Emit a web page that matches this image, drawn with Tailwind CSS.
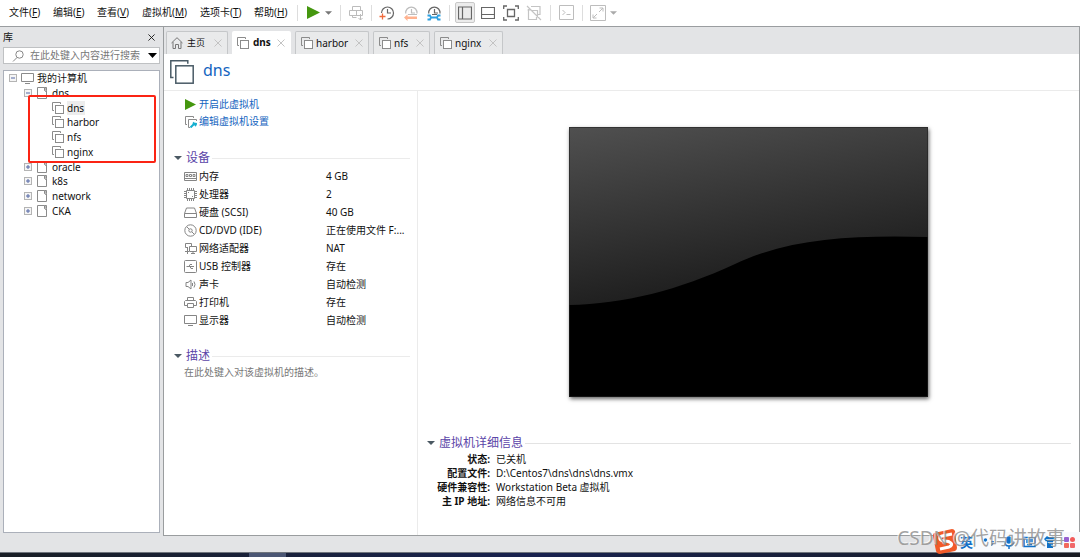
<!DOCTYPE html>
<html lang="zh-CN">
<head>
<meta charset="utf-8">
<title>dns - VMware Workstation</title>
<script src="https://cdn.jsdelivr.net/npm/@tailwindcss/browser@4"></script>
</head>
<body class="relative flex h-screen flex-col overflow-hidden bg-[#e3e4e6] font-['Noto_Sans','Noto_Sans_CJK_SC',sans-serif] text-[10px] text-[#111]">
<svg class="hidden">
  <symbol id="vm" viewBox="0 0 12 12"><path d="M2 8.500H.5v-8h8V2" fill="none" stroke="#8b8b8b"/><rect x="3.500" y="3.500" width="8" height="8" fill="#fff" stroke="#8b8b8b"/></symbol>
  <symbol id="folder" viewBox="0 0 12 12"><path d="M8.500.500H1.500v11h9V4" fill="none" stroke="#8b8b8b"/><path d="M8.500.500h2v3l-1 1-1-1z" fill="#bbb" stroke="#8b8b8b"/></symbol>
  <symbol id="minus" viewBox="0 0 8 8"><rect x=".5" y=".5" width="7" height="7" fill="#f5f5f5" stroke="#b4b4b4"/><path d="M2 4h4" stroke="#5267a5"/></symbol>
  <symbol id="plus" viewBox="0 0 8 8"><rect x=".5" y=".5" width="7" height="7" fill="#f5f5f5" stroke="#b4b4b4"/><path d="M2 4h4M4 2v4" stroke="#5267a5"/></symbol>
  <symbol id="x" viewBox="0 0 8 8"><path d="M.5.500l7 7m0-7l-7 7" fill="none" stroke="currentColor"/></symbol>
  <symbol id="play" viewBox="0 0 12 12"><path d="M0 0l12 6-12 6z" fill="#45970f"/></symbol>
  <symbol id="down" viewBox="0 0 8 4"><path d="M0 0h8L4 4z" fill="currentColor"/></symbol>
</svg>

<header class="flex h-[27px] shrink-0 items-center border-b border-[#9a9da0] bg-white pb-px pl-[3px]">
  <nav class="flex items-center">
    <button class="w-11 pl-1.5 text-left whitespace-nowrap">文件(<u>F</u>)</button>
    <button class="w-11 pl-1.5 text-left whitespace-nowrap">编辑(<u>E</u>)</button>
    <button class="w-[45px] pl-1.5 text-left whitespace-nowrap">查看(<u>V</u>)</button>
    <button class="w-[58px] pl-1.5 text-left whitespace-nowrap">虚拟机(<u>M</u>)</button>
    <button class="w-[54px] pl-1.5 text-left whitespace-nowrap">选项卡(<u>T</u>)</button>
    <button class="w-[49px] pl-1.5 text-left whitespace-nowrap">帮助(<u>H</u>)</button>
  </nav>
  <div class="flex items-center">
    <i class="h-4 w-px bg-[#ddd]"></i>
    <button aria-label="开启" class="ml-[9px]"><svg class="h-[13px] w-[13px]"><use href="#play"/></svg></button>
    <button aria-label="电源选项" class="ml-[5px] text-[#777]"><svg class="h-1 w-[7px]"><use href="#down"/></svg></button>
    <i class="ml-2 h-4 w-px bg-[#ddd]"></i>
    <button aria-label="发送按键" class="ml-[7px]"><svg class="h-4 w-4" viewBox="0 0 16 16" fill="none" stroke="#bcbcbc"><path d="M4.500 1.500h8v4h-8M4.500 1.500v4M1.500 5.500h13v5h-13zM8.500 5.500v5M4.500 10.500v2h4M12.500 9v6M10.500 13l2 2 2-2"/></svg></button>
    <i class="ml-[7px] h-4 w-px bg-[#ddd]"></i>
    <button aria-label="拍摄快照" class="ml-[7px] text-[#666]"><svg class="h-4 w-4" viewBox="0 0 16 16" fill="none"><path d="M2.500 8a6 6 0 1 1 6 6M8.500 4v4H12" stroke="currentColor" stroke-width="1.200"/><path d="M.5 11.500h6M3.500 8.500v6" stroke="#ef6a3c" stroke-width="1.300"/></svg></button>
    <button aria-label="恢复快照" class="ml-2 text-[#bdbdbd]"><svg class="h-4 w-4" viewBox="0 0 16 16" fill="none"><path d="M2.700 8.500a5.700 5.700 0 1 1 11.300 0M8.500 4v4H12M5 9.500h9" stroke="currentColor" stroke-width="1.200"/><path d="M1 12.500L4.500 9.500v2H14v2.500H4.500v2z" fill="#ffb28f"/></svg></button>
    <button aria-label="管理快照" class="ml-[7px] text-[#666]"><svg class="h-4 w-4" viewBox="0 0 16 16" fill="none"><path d="M2.700 8.500a5.700 5.700 0 1 1 11.300 0M8.500 4v4H12M6 9.500h5" stroke="currentColor" stroke-width="1.200"/><path d="M1.500 10.500H4L5 12.500 4 14.500H1.500M4.500 12.500h7M14.500 10.500H12L11 12.500l1 2h2.500" stroke="#2d9fe0" stroke-width="1.800"/></svg></button>
    <i class="ml-[7px] h-4 w-px bg-[#ddd]"></i>
    <button aria-label="显示库" class="ml-[5px] flex h-[21px] w-[20px] items-center justify-center rounded-xs border border-[#c8c8c8] bg-[#ececec]"><svg class="h-3.5 w-3.5" viewBox="0 0 14 14" fill="none" stroke="#666"><path d="M.5 1h13v12H.5zM4.500 1v12" stroke-width="1.200"/></svg></button>
    <button aria-label="显示缩略图" class="ml-1.5"><svg class="h-3.5 w-3.5" viewBox="0 0 14 14" fill="none" stroke="#666" stroke-width="1.200"><path d="M.5 1.500h13v11H.5zM.5 8.500h13"/></svg></button>
    <button aria-label="全屏" class="ml-2"><svg class="h-4 w-4" viewBox="0 0 16 16" fill="none" stroke="#666" stroke-width="1.300"><path d="M4.500 4.500h7v7h-7zM.7 4V1H4M12 1h3.300v3M15.300 12v3H12M4 15H.7v-3"/></svg></button>
    <button aria-label="Unity" class="ml-[7px]"><svg class="h-4 w-4" viewBox="0 0 16 16" fill="none" stroke="#c4c4c4" stroke-width="1.200"><path d="M5 1.500h9v8h-2M2.500 4v10.500h8V12M5.500 5.500h6v7M1 1l14 14M1.500 5h3"/></svg></button>
    <i class="ml-2 h-4 w-px bg-[#ddd]"></i>
    <button aria-label="控制台" class="ml-2"><svg class="h-[15px] w-[15px]" viewBox="0 0 15 15" fill="none" stroke="#bdbdbd"><path d="M.5.500h14v14H.5zM3.500 5L6 7.500 3.500 10M7.500 9.500h4"/></svg></button>
    <i class="ml-2 h-4 w-px bg-[#ddd]"></i>
    <button aria-label="拉伸" class="ml-[7px]"><svg class="h-4 w-4" viewBox="0 0 16 16" fill="none" stroke="#bdbdbd"><path d="M.5.500h15v15H.5zM9 7l4-4M9.500 3H13v3.500M7 9l-4 4M3 9.500V13h3.500" /></svg></button>
    <button aria-label="拉伸选项" class="ml-1 text-[#aaa]"><svg class="h-1 w-[7px]"><use href="#down"/></svg></button>
  </div>
</header>

<div class="flex min-h-0 flex-1">
  <aside class="flex w-[163px] shrink-0 flex-col pr-[3px] pb-[3px] pl-[3px]">
    <div class="flex h-5 items-center justify-between pr-[5px]"><h2>库</h2><button aria-label="关闭库"><svg class="h-[7px] w-[7px]"><use href="#x"/></svg></button></div>
    <div class="flex h-[17px] shrink-0 items-center border border-[#bfc1c3] bg-white pr-0.5 pl-2">
      <svg class="h-3 w-3 shrink-0" viewBox="0 0 12 12" fill="none" stroke="#888"><circle cx="7.500" cy="4.500" r="3.700"/><path d="M5 7.500L1 11.500"/></svg>
      <input aria-label="搜索" placeholder="在此处键入内容进行搜索" class="ml-1.5 w-0 flex-1 text-[10px] outline-none placeholder:text-[#777]">
      <button aria-label="搜索选项" class="text-black"><svg class="h-[5px] w-[9px]" viewBox="0 0 8 4" preserveAspectRatio="none"><path d="M0 0h8L4 4z"/></svg></button>
    </div>
    <div class="relative mt-1.5 flex-1 border border-[#abb0ba] bg-white leading-[14px]">
      <ul class="grid h-[147px] grid-rows-10">
        <li class="flex items-center pl-[5px]"><svg class="h-2 w-2"><use href="#minus"/></svg><svg class="mr-[3px] ml-1 h-3 w-[13px]" viewBox="0 0 13 12" fill="none" stroke="#8b8b8b"><path d="M.5 1.500h12v8H.5zM4 11.500h5"/></svg>我的计算机</li>
        <li class="flex items-center pl-5"><svg class="h-2 w-2"><use href="#minus"/></svg><svg class="mr-1 ml-1 h-3 w-3"><use href="#folder"/></svg>dns</li>
        <li class="flex items-center pl-12"><svg class="mr-[3px] h-3 w-3"><use href="#vm"/></svg><span class="bg-[#ededed] pr-px">dns</span></li>
        <li class="flex items-center pl-12"><svg class="mr-[3px] h-3 w-3"><use href="#vm"/></svg>harbor</li>
        <li class="flex items-center pl-12"><svg class="mr-[3px] h-3 w-3"><use href="#vm"/></svg>nfs</li>
        <li class="flex items-center pl-12"><svg class="mr-[3px] h-3 w-3"><use href="#vm"/></svg>nginx</li>
        <li class="flex items-center pl-5"><svg class="h-2 w-2"><use href="#plus"/></svg><svg class="mr-1 ml-1 h-3 w-3"><use href="#folder"/></svg>oracle</li>
        <li class="flex items-center pl-5"><svg class="h-2 w-2"><use href="#plus"/></svg><svg class="mr-1 ml-1 h-3 w-3"><use href="#folder"/></svg>k8s</li>
        <li class="flex items-center pl-5"><svg class="h-2 w-2"><use href="#plus"/></svg><svg class="mr-1 ml-1 h-3 w-3"><use href="#folder"/></svg>network</li>
        <li class="flex items-center pl-5"><svg class="h-2 w-2"><use href="#plus"/></svg><svg class="mr-1 ml-1 h-3 w-3"><use href="#folder"/></svg>CKA</li>
      </ul>
      <div class="absolute top-6 left-6 h-[68px] w-[128px] rounded-xs border-2 border-[#fb2414]"></div>
    </div>
  </aside>

  <main class="flex min-w-0 flex-1 flex-col border-r border-b border-l border-[#9a9d9f] bg-white">
    <div class="flex h-[27px] shrink-0 items-end gap-1 bg-[#e3e4e6] pl-0.5">
      <div class="flex h-[23px] w-[62px] items-center rounded-t-xs border border-b-0 border-[#c5c7c9] bg-[#e9eaeb] pr-[5px] pl-1"><svg class="h-3 w-3" viewBox="0 0 12 12" fill="none" stroke="#777"><path d="M.5 6L6 .7 11.500 6M2 5v6.500h2.500v-4h3v4H10V5"/></svg><button class="ml-1 text-[9px]">主页</button><button aria-label="关闭主页" class="ml-auto text-[#c3c3c3]"><svg class="h-2 w-2"><use href="#x"/></svg></button></div>
      <div class="flex h-[23px] w-[59px] items-center rounded-t-xs bg-white pr-1.5 pl-[5px]"><svg class="h-3 w-3"><use href="#vm"/></svg><button class="ml-1 font-bold">dns</button><button aria-label="关闭 dns" class="ml-auto text-[#c3c3c3]"><svg class="h-2 w-2"><use href="#x"/></svg></button></div>
      <div class="flex h-[23px] w-[74px] items-center rounded-t-xs border border-b-0 border-[#c5c7c9] bg-[#e9eaeb] pr-[5px] pl-[5px]"><svg class="h-3 w-3"><use href="#vm"/></svg><button class="ml-[3px]">harbor</button><button aria-label="关闭 harbor" class="ml-auto text-[#c3c3c3]"><svg class="h-2 w-2"><use href="#x"/></svg></button></div>
      <div class="flex h-[23px] w-[57px] items-center rounded-t-xs border border-b-0 border-[#c5c7c9] bg-[#e9eaeb] pr-[5px] pl-[5px]"><svg class="h-3 w-3"><use href="#vm"/></svg><button class="ml-[3px]">nfs</button><button aria-label="关闭 nfs" class="ml-auto text-[#c3c3c3]"><svg class="h-2 w-2"><use href="#x"/></svg></button></div>
      <div class="flex h-[23px] w-[69px] items-center rounded-t-xs border border-b-0 border-[#c5c7c9] bg-[#e9eaeb] pr-[5px] pl-[5px]"><svg class="h-3 w-3"><use href="#vm"/></svg><button class="ml-[3px]">nginx</button><button aria-label="关闭 nginx" class="ml-auto text-[#c3c3c3]"><svg class="h-2 w-2"><use href="#x"/></svg></button></div>
    </div>
    <div class="flex h-[37px] shrink-0 items-center border-b border-[#ebebeb] pl-1.5">
      <svg class="h-6 w-6" viewBox="0 0 24 24" fill="none" stroke="#4a5b66" stroke-width="1.500"><path d="M3.500 17.500H.8V.8h17v3"/><rect x="5.800" y="5.800" width="17.400" height="17.400"/></svg>
      <h1 class="ml-[9px] pb-1 text-base leading-5 text-[#1464c0]">dns</h1>
    </div>
    <div class="flex min-h-0 flex-1">
      <section class="w-[254px] shrink-0 border-r border-[#ebebeb] pt-[5px] pr-[7px]">
        <div class="flex flex-col pl-[21px] text-[#1464c0]">
          <a href="#on" class="flex h-[17px] items-center"><svg class="mr-[3px] h-[11px] w-[11px]"><use href="#play"/></svg>开启此虚拟机</a>
          <a href="#edit" class="flex h-[17px] items-center"><svg class="mr-0.5 h-3 w-3" viewBox="0 0 12 12" fill="none"><path d="M2 8.500H.5v-8h8V2M5 11.500H3.500v-8h8V5" stroke="#8b8b8b"/><path d="M5.500 11.500L9 8M8 6.500l2.500 2.500 1-2" stroke="#16afd0" stroke-width="2"/></svg>编辑虚拟机设置</a>
        </div>
        <div class="mt-[19px] flex h-[18px] items-center pl-2.5 text-[#4b5963]"><svg class="h-1 w-2"><use href="#down"/></svg><h2 class="mr-0.5 ml-1 text-xs leading-4 text-[#5b45a8]">设备</h2><i class="h-px flex-1 bg-[#ebebeb]"></i></div>
        <table class="w-full table-fixed text-left text-[10px]">
          <tbody class="[&_svg]:mr-0.5 [&_svg]:h-[13px] [&_svg]:w-[13px] [&_svg]:shrink-0 [&_svg]:fill-none [&_svg]:stroke-[#858585]">
          <tr class="h-[18px]"><th class="w-[162px] p-0 pl-5 font-normal"><span class="flex items-center"><svg viewBox="0 0 13 13"><path d="M.5 2.500h12v8H.5zM2 4.500h2v2H2zM5.500 4.500h2v2h-2zM9 4.500h2v2H9zM1 8.500h11" /></svg>内存</span></th><td class="p-0">4 GB</td></tr>
          <tr class="h-[18px]"><th class="p-0 pl-5 font-normal"><span class="flex items-center"><svg viewBox="0 0 13 13"><path d="M2.500 2.500h8v8h-8zM3.500 0v2M5.500 0v2M7.500 0v2M9.500 0v2M3.500 11v2M5.500 11v2M7.500 11v2M9.500 11v2M0 3.500h2M0 5.500h2M0 7.500h2M0 9.500h2M11 3.500h2M11 5.500h2M11 7.500h2M11 9.500h2M4 4.500h1M8 8.500h1"/></svg>处理器</span></th><td class="p-0">2</td></tr>
          <tr class="h-[18px]"><th class="p-0 pl-5 font-normal"><span class="flex items-center"><svg viewBox="0 0 13 13"><path d="M.5 7.500l2-5.500h8l2 5.500v4H.5zM.5 7.500h12"/></svg>硬盘 (SCSI)</span></th><td class="p-0">40 GB</td></tr>
          <tr class="h-[18px]"><th class="p-0 pl-5 font-normal"><span class="flex items-center"><svg viewBox="0 0 13 13"><circle cx="6.500" cy="6.500" r="5.700"/><circle cx="6.500" cy="6.500" r="1.700"/><path d="M3 3l2 2M8 8l2 2"/></svg>CD/DVD (IDE)</span></th><td class="p-0 whitespace-nowrap">正在使用文件 F:...</td></tr>
          <tr class="h-[18px]"><th class="p-0 pl-5 font-normal"><span class="flex items-center"><svg viewBox="0 0 13 13"><path d="M4 5.500H1.500v-4h6V4M5.500 4.500h7v5h-7zM9 9.500v2M7 11.500h4M3.500 6v3M1 9.500h4M3.500 9v3"/></svg>网络适配器</span></th><td class="p-0">NAT</td></tr>
          <tr class="h-[18px]"><th class="p-0 pl-5 font-normal"><span class="flex items-center"><svg viewBox="0 0 13 13"><rect x=".5" y=".5" width="12" height="12" rx="1"/><path d="M3 6.500h7M5 6.500l1-2h2M6 6.500l1 2h2M2.500 6.500h2"/></svg>USB 控制器</span></th><td class="p-0">存在</td></tr>
          <tr class="h-[18px]"><th class="p-0 pl-5 font-normal"><span class="flex items-center"><svg viewBox="0 0 13 13"><path d="M2 4.500h2l3-2.500v9L4 8.500H2zM8.500 5v3M10 3.500q2 3 0 6"/></svg>声卡</span></th><td class="p-0">自动检测</td></tr>
          <tr class="h-[18px]"><th class="p-0 pl-5 font-normal"><span class="flex items-center"><svg viewBox="0 0 13 13"><path d="M3.500 4.500v-3h6v3M3 9.500H.5v-4l1-1h10l1 1v4H10M3.500 7.500h6v4h-6z"/></svg>打印机</span></th><td class="p-0">存在</td></tr>
          <tr class="h-[18px]"><th class="p-0 pl-5 font-normal"><span class="flex items-center"><svg viewBox="0 0 13 13"><path d="M.5 1.500h12v8H.5zM4 11.500h5"/></svg>显示器</span></th><td class="p-0">自动检测</td></tr>
          </tbody>
        </table>
        <div class="mt-[18px] flex h-[18px] items-center pl-2.5 text-[#4b5963]"><svg class="h-1 w-2"><use href="#down"/></svg><h2 class="mr-0.5 ml-1 text-xs leading-4 text-[#5b45a8]">描述</h2><i class="h-px flex-1 bg-[#ebebeb]"></i></div>
        <p class="pl-5 leading-[15px] text-[#777]">在此处键入对该虚拟机的描述。</p>
      </section>

      <section class="flex min-w-0 flex-1 flex-col pt-9">
        <svg class="mx-auto h-[270px] w-[359px] shrink-0 shadow-[1px_2px_4px_rgba(0,0,0,0.6)]" viewBox="0 0 359 270" role="img" aria-label="虚拟机屏幕">
          <defs><linearGradient id="screen" x1="0" y1="0" x2=".35" y2="1"><stop offset="0" stop-color="#505050"/><stop offset="1" stop-color="#1b1b1b"/></linearGradient></defs>
          <rect width="359" height="270"/>
          <path d="M0 0h359v110C285 108 220 111 166 137C110 163 55 177 0 178z" fill="url(#screen)"/>
          <rect x=".5" y=".5" width="358" height="269" fill="none" stroke="#222" stroke-opacity=".6"/>
        </svg>
        <div class="mt-auto pr-2 pb-[27px] pl-[9px]">
          <div class="flex h-[18px] items-center text-[#4b5963]"><svg class="h-1 w-2"><use href="#down"/></svg><h2 class="mr-0.5 ml-1 text-xs leading-4 text-[#5b45a8]">虚拟机详细信息</h2><i class="h-px flex-1 bg-[#e3e3e3]"></i></div>
          <dl class="grid grid-cols-[63px_1fr] gap-x-[6px] text-[10px] leading-[14px] [&>dt]:text-right [&>dt]:font-bold [&>dt]:whitespace-nowrap">
            <dt>状态:</dt><dd>已关机</dd>
            <dt>配置文件:</dt><dd>D:\Centos7\dns\dns\dns.vmx</dd>
            <dt>硬件兼容性:</dt><dd>Workstation Beta 虚拟机</dd>
            <dt>主 IP 地址:</dt><dd>网络信息不可用</dd>
          </dl>
        </div>
      </section>
    </div>
  </main>
</div>
<footer class="h-4 shrink-0"></footer>
<div class="flex h-[5px] shrink-0 border-t border-[#6f747c] bg-linear-to-r from-[#191e25] via-[#192250] to-[#191b22]"><i class="ml-[249px] w-[37px] bg-[#4b5674]"></i></div>

<div class="absolute right-0 bottom-[5px] flex h-5 w-[136px] items-center bg-[#f8fafd] pl-4 text-[#1170c8]">
  <svg class="absolute -top-1 -left-3 h-[26px] w-[26px]" viewBox="0 0 26 26"><path d="M2 5L20 1q2 0 3 2l2 17q0 2-2 3L8 26q-3 0-4-3L1 8q0-2 1-3z" fill="#f15a29"/><path d="M20 6L10 8q-3 1-2 3t5 2 6 2-2 4L8 21" fill="none" stroke="#fff" stroke-width="3"/></svg>
  <span class="text-[13px] leading-4 font-bold">英</span>
  <svg class="ml-2.5 h-3 w-3" viewBox="0 0 12 12" fill="#1170c8"><circle cx="2.500" cy="4" r="1.700"/><path d="M8 5h3q0 4-3 5 1-2 0-5z"/></svg>
  <svg class="ml-2 h-[13px] w-3" viewBox="0 0 12 13" fill="none" stroke="#1170c8" stroke-width="1.500"><rect x="4" y="1" width="4" height="6" rx="2" fill="#1170c8"/><path d="M1.500 5q0 5 4.500 5t4.500-5M6 10v3"/></svg>
  <svg class="ml-2 h-3 w-[13px]" viewBox="0 0 13 12" fill="none" stroke="#1170c8" stroke-width="1.500"><path d="M1 1.500h11v9H1zM3 4h7M3 6h7M4 8.500h5"/></svg>
  <svg class="ml-2 h-3 w-3" viewBox="0 0 12 12" fill="#1170c8"><path d="M3 0q3 2 6 0l3 3-2 2.500L9 5v7H3V5l-1 .5L0 3z"/></svg>
  <svg class="ml-2 h-[11px] w-[11px]" viewBox="0 0 11 11"><rect width="5" height="5" rx="1" fill="#9760d0"/><circle cx="8.500" cy="2.500" r="2.500" fill="#f25b5b"/><rect y="6" width="5" height="5" rx="1" fill="#f2695c"/><rect x="6" y="6" width="5" height="5" rx="1" fill="#f0686b"/></svg>
</div>
<p class="absolute right-[15px] bottom-[7px] text-[19px] leading-6 whitespace-nowrap text-[#8b8b8b]/80 [text-shadow:-1px_-1px_0_#ffffffb0]">CSDN @代码讲故事</p>
</body>
</html>
